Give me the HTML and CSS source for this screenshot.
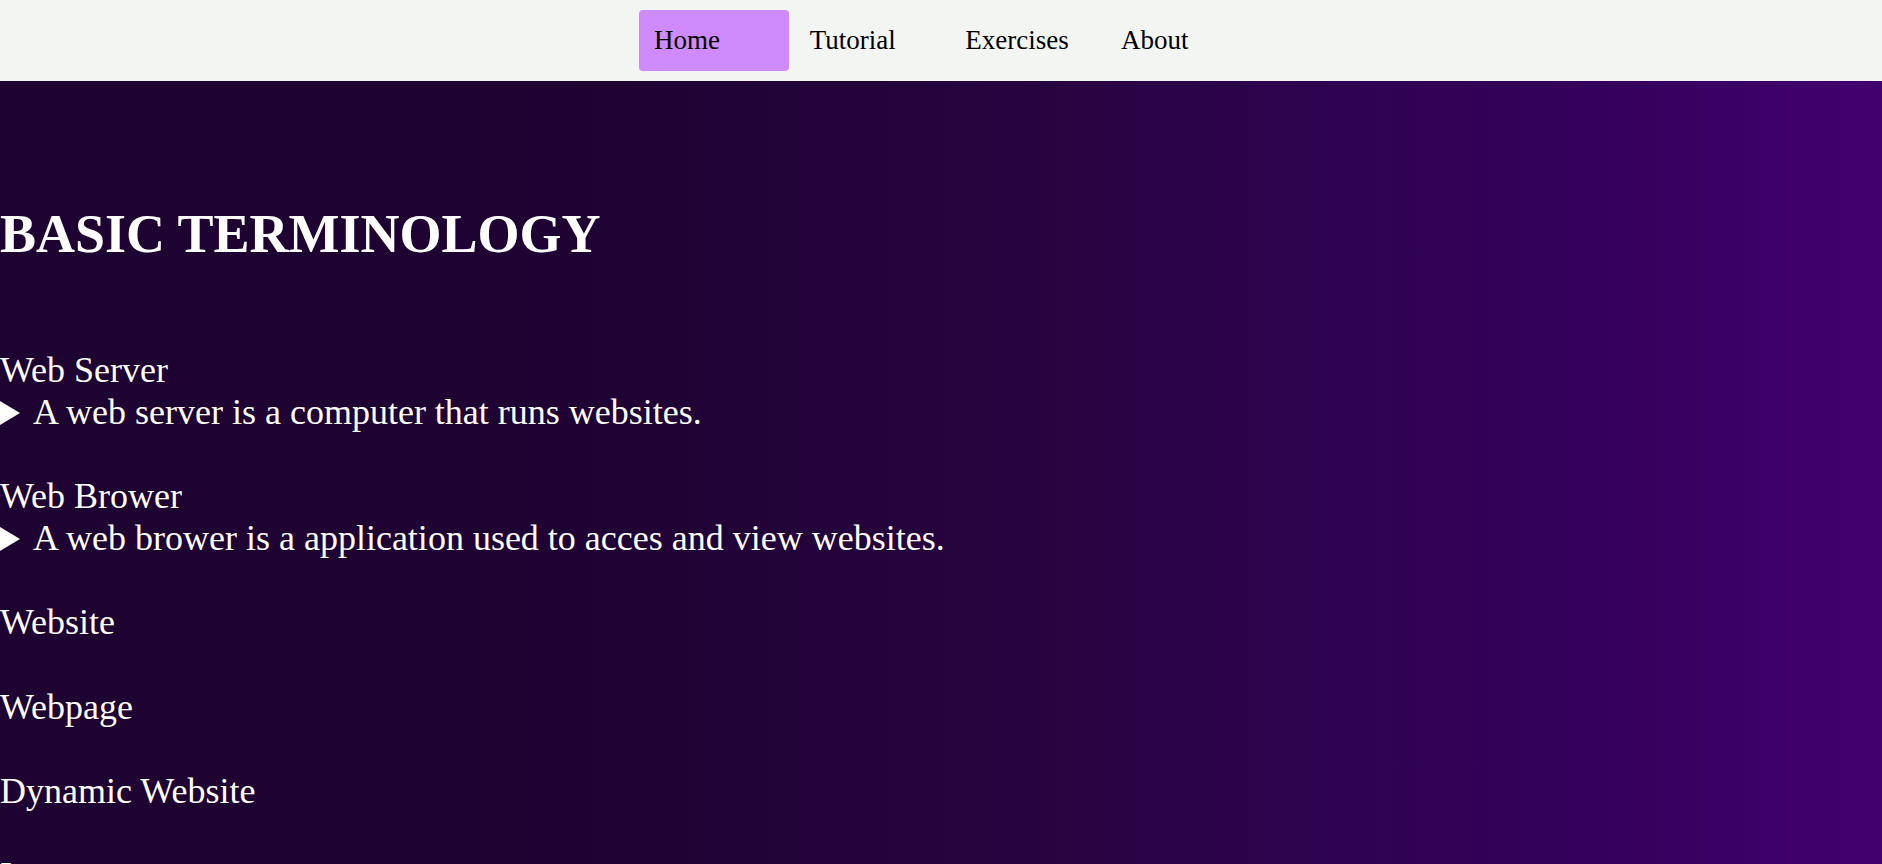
FILE: index.html
```html
<!DOCTYPE html>
<html lang="en">
<head>
<meta charset="utf-8">
<title>Basic Terminology</title>
<link rel="stylesheet" href="styles.css">
</head>
<body>
<header class="topbar">
  <nav class="menu">
    <a class="menu-item active" href="#">Home</a>
    <a class="menu-item" href="#">Tutorial</a>
    <a class="menu-item" href="#">Exercises</a>
    <a class="menu-item" href="#">About</a>
  </nav>
</header>
<main class="content">
  <h1 class="title">BASIC TERMINOLOGY</h1>
  <section class="term">
    <div class="term-name">Web Server</div>
    <details class="term-detail"><summary>A web server is a computer that runs websites.</summary></details>
  </section>
  <section class="term">
    <div class="term-name">Web Brower</div>
    <details class="term-detail"><summary>A web brower is a application used to acces and view websites.</summary></details>
  </section>
  <section class="term">
    <div class="term-name">Website</div>
  </section>
  <section class="term">
    <div class="term-name">Webpage</div>
  </section>
  <section class="term">
    <div class="term-name">Dynamic Website</div>
  </section>
  <section class="term">
    <div class="term-name">Internet</div>
  </section>
</main>
</body>
</html>
```
FILE: styles.css
```css
html, body {
  margin: 0;
  padding: 0;
}
body {
  font-family: "Liberation Serif", "Times New Roman", serif;
  background: linear-gradient(to right, #1e0231 0%, #1f0233 30%, #27043f 55%, #2f0352 72%, #35005c 85%, #42006f 100%);
  background-attachment: fixed;
  color: #ffffff;
  min-height: 100vh;
}
.topbar {
  background: #f3f5f2;
  padding: 10px 0;
}
.menu {
  display: flex;
  justify-content: center;
  gap: 5.7px;
  padding-left: 13px;
}
.menu-item {
  display: block;
  width: 150px;
  box-sizing: border-box;
  padding: 15px 15px;
  font-size: 27px;
  line-height: 31px;
  color: #000000;
  text-decoration: none;
  border-radius: 4px;
}
.menu-item.active {
  background: #cf8afb;
}
.content {
  padding: 0;
}
.title {
  font-size: 54px;
  font-weight: bold;
  margin: 122px 0 84px;
}
.term {
  font-size: 36px;
  margin-bottom: 42.2px;
}
.term-name {
  margin: 0;
}
.term-detail summary {
  cursor: pointer;
  list-style: none;
}
.term-detail summary::-webkit-details-marker {
  display: none;
}
.term-detail summary::before {
  content: "";
  display: inline-block;
  width: 0;
  height: 0;
  border-left: 20px solid #ffffff;
  border-top: 12px solid transparent;
  border-bottom: 12px solid transparent;
  margin-right: 13px;
  vertical-align: -1px;
}
```
